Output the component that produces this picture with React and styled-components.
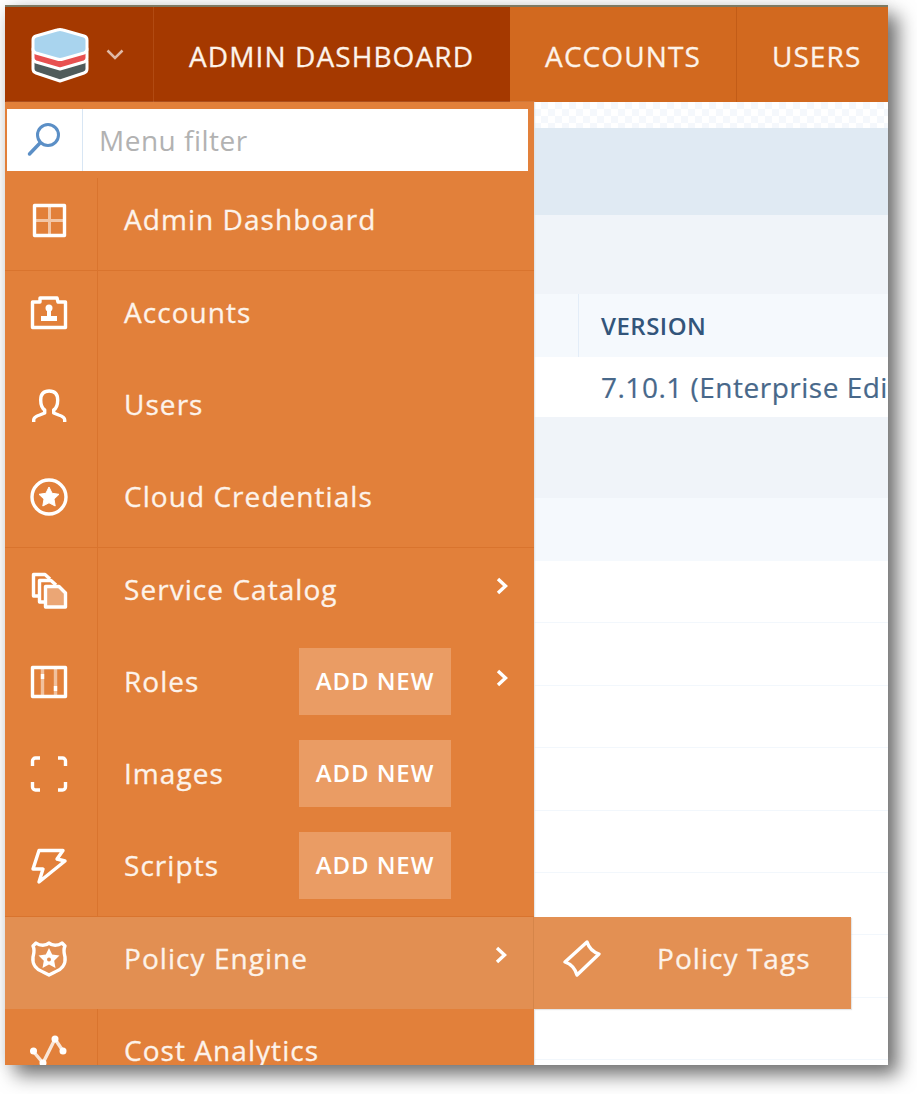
import styled, { createGlobalStyle } from "styled-components";

const GlobalStyle = createGlobalStyle`
  html, body {
    margin: 0;
    padding: 0;
    background: #fff;
    font-family: "Open Sans", "Liberation Sans", sans-serif;
  }
  * { box-sizing: border-box; }
`;

const Page = styled.div`
  width: 917px;
  height: 1094px;
  padding: 5px 0 0 5px;
  overflow: hidden;
`;

const Window = styled.div`
  width: 883px;
  height: 1060px;
  border-top: 2px solid #7d7a63;
  background: #fff;
  display: flex;
  flex-direction: column;
  overflow: hidden;
`;

const Frame = styled.div`
  width: 883px;
  height: 1060px;
  box-shadow: 10px 10px 18px rgba(0, 0, 0, 0.55), 0 0 14px rgba(0, 0, 0, 0.08);
`;

const TopNav = styled.nav`
  display: flex;
  height: 95px;
  flex: none;
  background: #d2691f;
`;

const Brand = styled.div`
  width: 149px;
  flex: none;
  display: flex;
  align-items: center;
  padding-left: 26px;
  gap: 17px;
  background: #a53900;
  border-right: 1px solid #b14a12;
`;

const Tab = styled.div`
  flex: none;
  display: flex;
  align-items: center;
  padding: 2px 35px 0;
  font-size: 28px;
  letter-spacing: 1.1px;
  -webkit-text-stroke: 0.3px #fdf3ea;
  color: #fdf3ea;
  white-space: nowrap;
  background: ${(p) => (p.$active ? "#a53900" : "transparent")};
  border-right: 1px solid ${(p) => (p.$active ? "#a53900" : "#c25c17")};
`;

const Body = styled.div`
  flex: 1;
  display: flex;
  min-height: 0;
`;

const Sidebar = styled.aside`
  width: 529px;
  flex: none;
  background: #e2803a;
  display: flex;
  flex-direction: column;
  box-shadow: 1px 0 1px rgba(225, 225, 225, 0.8);
  z-index: 1;
`;

const SearchWrap = styled.div`
  padding: 7px 6px 7px 2px;
  flex: none;
`;

const SearchBox = styled.div`
  height: 62px;
  background: #fff;
  display: flex;
`;

const SearchIcon = styled.div`
  width: 76px;
  display: flex;
  align-items: center;
  justify-content: center;
  border-right: 1px solid #d8e6f4;
`;

const SearchInput = styled.input`
  flex: 1;
  min-width: 0;
  border: none;
  outline: none;
  padding: 0 0 0 16px;
  background: transparent;
  font: 28px "Open Sans", sans-serif;
  letter-spacing: 0.5px;
  &::placeholder {
    color: #b2b2b2;
    opacity: 1;
  }
`;

const Row = styled.div`
  position: relative;
  height: ${(p) => (p.$divider ? "93px" : "92px")};
  flex: none;
  display: flex;
  background: ${(p) => (p.$hover ? "#e28f52" : "transparent")};
  border-bottom: ${(p) => (p.$divider ? "1px solid #d9742e" : "none")};
  border-right: ${(p) => (p.$hover ? "1px solid #d58549" : "none")};
`;

const IconCell = styled.div`
  width: 93px;
  flex: none;
  display: flex;
  align-items: center;
  padding: 0 0 9px 25px;
  border-right: ${(p) => (p.$hover ? "none" : "1px solid #d9742e")};
`;

const RowContent = styled.div`
  flex: 1;
  min-width: 0;
  display: flex;
  align-items: center;
  padding: 7px 0 18px 26px;
`;

const Label = styled.span`
  min-width: 175px;
  font-size: 28px;
  letter-spacing: 1.05px;
  -webkit-text-stroke: 0.3px #fdf3ea;
  color: #fdf3ea;
  white-space: nowrap;
`;

const AddButton = styled.div`
  width: 152px;
  height: 67px;
  margin-top: 2px;
  display: flex;
  align-items: center;
  justify-content: center;
  background: #ea9c64;
  color: #fff;
  font-size: 24px;
  font-weight: 600;
  letter-spacing: 0.9px;
  padding-bottom: 2px;
  white-space: nowrap;
`;

const Chevron = styled.svg`
  width: 12px;
  height: 18px;
  margin: 0 26px 6px auto;
  flex: none;
`;

const Flyout = styled.div`
  position: absolute;
  top: 0;
  left: calc(100% + 1px);
  width: 317px;
  height: 92px;
  display: flex;
  align-items: center;
  padding: 0 0 11px 29px;
  gap: 56px;
  background: #e39053;
  box-shadow: 1px 1px 1px rgba(190, 190, 190, 0.4);
`;

const Main = styled.main`
  flex: 1;
  min-width: 0;
  display: flex;
  flex-direction: column;
  overflow: hidden;
`;

const Checker = styled.div`
  height: 26px;
  flex: none;
  background: repeating-conic-gradient(#f5f8fc 0 25%, #fff 0 50%) 0 0 / 14px 14px;
`;

const Band = styled.div`
  height: ${(p) => p.$h}px;
  flex: none;
  background: ${(p) => p.$bg};
`;

const HeadRow = styled.div`
  height: 63px;
  flex: none;
  background: #f5f9fd;
  padding-left: 44px;
  display: flex;
`;

const HeadCell = styled.div`
  display: flex;
  align-items: center;
  padding-left: 22px;
  border-left: 1px solid #e3edf8;
  font-size: 24px;
  font-weight: 600;
  letter-spacing: 0.5px;
  color: #33557a;
  white-space: nowrap;
`;

const ValueRow = styled.div`
  height: 60px;
  flex: none;
  display: flex;
  align-items: center;
  padding: 0 0 0 67px;
  font-size: 28px;
  letter-spacing: 0.5px;
  -webkit-text-stroke: 0.2px #48688a;
  color: #48688a;
  white-space: nowrap;
`;

const EmptyRow = styled.div`
  height: 62.4px;
  flex: none;
  border-bottom: 1px solid #f2f7fc;
`;

const Svg = ({ children, size = 38 }) => (
  <svg width={size} height={size} viewBox="0 0 38 38" fill="none" stroke="#fff" strokeWidth="3.4" strokeLinejoin="round">
    {children}
  </svg>
);

const starPoints = (cx, cy, r) => {
  const pts = [];
  for (let i = 0; i < 10; i++) {
    const rad = i % 2 ? r * 0.5 : r;
    const a = (Math.PI / 5) * i - Math.PI / 2;
    pts.push(`${(cx + rad * Math.cos(a)).toFixed(1)},${(cy + rad * Math.sin(a)).toFixed(1)}`);
  }
  return pts.join(" ");
};

const GridIcon = () => (
  <Svg>
    <rect x="4.5" y="4.5" width="30" height="30" />
    <path d="M19.5 5v29M5 19.5h29" strokeOpacity="0.55" strokeWidth="3" />
  </Svg>
);

const AccountsIcon = () => (
  <Svg>
    <path d="M2.5 8H10V4H27L28 8H35.5V33.5H2.5Z" />
    <circle cx="19" cy="14" r="3.5" fill="#fff" stroke="none" />
    <path d="M17 15h4v7h6v5H11v-5h6z" fill="#fff" stroke="none" />
  </Svg>
);

const UserIcon = () => (
  <Svg>
    <path d="M3.7 36v-2c0-3 3-4 6-5l5-2v-3c-3-2-4-5-4-10 0-6 3-9 8.5-9s8.5 3 8.5 9c0 5-1 8-4 10v3l5 2c3 1 6 2 6 5v2" />
  </Svg>
);

const StarIcon = () => (
  <Svg>
    <circle cx="19" cy="19" r="17" />
    <polygon points={starPoints(19, 19.5, 10.5)} fill="#fff" stroke="#fff" strokeWidth="1" />
  </Svg>
);

const CatalogIcon = () => (
  <Svg>
    <path d="M8 25H3.5V3.5H15L20 8" />
    <path d="M14 31H9.5V9.5H21L26 14" />
    <path d="M15.5 15.5H29L35.5 22V36H15.5Z" fill="rgba(255,255,255,0.3)" />
  </Svg>
);

const RolesIcon = () => (
  <Svg>
    <rect x="2.5" y="4.5" width="33" height="29" />
    <path d="M12.5 5v29M25.5 5v29" strokeOpacity="0.5" />
    <path d="M12.5 11v5M25.5 23v5" />
  </Svg>
);

const ImagesIcon = () => (
  <Svg>
    <path d="M2.5 11V6a3 3 0 0 1 3-3H10M28 3h4.5a3 3 0 0 1 3 3v5M35.5 27v5a3 3 0 0 1-3 3H28M10 35H5.5a3 3 0 0 1-3-3v-5" />
  </Svg>
);

const BoltIcon = () => (
  <Svg>
    <polygon points="9,3.5 33,3.5 27,12 35,14 9,35 13,22 3,22" />
  </Svg>
);

const ShieldIcon = () => (
  <Svg>
    <path d="M19 3c3 3 9 3 13 0l3 3c-2 4-1 7 0 11 1 8-4 13-10 15l-6 3-6-3C7 30 2 25 3 17c1-4 2-7 0-11l3-3c4 3 10 3 13 0z" />
    <polygon points={starPoints(19, 19, 11)} fill="#fff" stroke="none" />
    <circle cx="19" cy="19.5" r="2" fill="#e28f52" stroke="none" />
  </Svg>
);

const CostIcon = () => (
  <Svg>
    <path d="M3 19L13 31L25 7L33 19" strokeOpacity="0.8" />
    <circle cx="3.5" cy="19" r="3.5" fill="#fff" stroke="none" />
    <circle cx="13" cy="31" r="3.5" fill="#fff" stroke="none" />
    <circle cx="25" cy="7" r="3.5" fill="#fff" stroke="none" />
    <circle cx="33" cy="19" r="3.5" fill="#fff" stroke="none" />
  </Svg>
);

const TicketIcon = () => (
  <Svg>
    <path d="M24 3Q27 12 36 15L14 36Q11 26 2 23Z" />
  </Svg>
);

const Logo = () => (
  <svg width="58" height="56" viewBox="0 0 58 56" stroke="#fff" strokeWidth="3" strokeLinejoin="round">
    <path d="M2 34Q2 31 5 30L29 22L53 30Q56 31 56 34V42Q56 45 53 46L29 54L5 46Q2 45 2 42Z" fill="#4f5b5b" />
    <path d="M2 23Q2 20 5 19L29 11L53 19Q56 20 56 23V31Q56 34 53 35L29 42L5 35Q2 34 2 31Z" fill="#e85050" />
    <path d="M5 9L26 3Q29 2 32 3L53 9Q56 10 56 13V22Q56 25 53 26L32 32Q29 33 26 32L5 26Q2 25 2 22V13Q2 10 5 9Z" fill="#a9d4ee" />
  </svg>
);

const Caret = () => (
  <svg width="18" height="11" viewBox="0 0 18 11" fill="none" stroke="rgba(255,255,255,0.65)" strokeWidth="2.5">
    <path d="M1.5 1.5L9 9L16.5 1.5" />
  </svg>
);

const Magnifier = () => (
  <svg width="36" height="36" viewBox="0 0 36 36" fill="none" stroke="#5b8fc6" strokeWidth="3" strokeLinecap="round">
    <circle cx="21" cy="13" r="10.5" />
    <path d="M13 21L2.5 32" strokeWidth="3.5" />
  </svg>
);

const RowChevron = () => (
  <Chevron viewBox="0 0 12 18" fill="none" stroke="#fff" strokeWidth="3.4">
    <path d="M2 2L9.5 9L2 16" />
  </Chevron>
);

const menu = [
  { icon: GridIcon, label: "Admin Dashboard", divider: true },
  { icon: AccountsIcon, label: "Accounts" },
  { icon: UserIcon, label: "Users" },
  { icon: StarIcon, label: "Cloud Credentials", divider: true },
  { icon: CatalogIcon, label: "Service Catalog", chevron: true },
  { icon: RolesIcon, label: "Roles", add: true, chevron: true },
  { icon: ImagesIcon, label: "Images", add: true },
  { icon: BoltIcon, label: "Scripts", add: true, divider: true },
  { icon: ShieldIcon, label: "Policy Engine", chevron: true, hover: true },
  { icon: CostIcon, label: "Cost Analytics" },
];

const App = () => {
  return (
    <>
      <GlobalStyle />
      <Page>
        <Frame>
          <Window>
            <TopNav>
              <Brand>
                <Logo />
                <Caret />
              </Brand>
              <Tab $active>ADMIN DASHBOARD</Tab>
              <Tab>ACCOUNTS</Tab>
              <Tab>USERS</Tab>
            </TopNav>
            <Body>
              <Sidebar>
                <SearchWrap>
                  <SearchBox>
                    <SearchIcon>
                      <Magnifier />
                    </SearchIcon>
                    <SearchInput placeholder="Menu filter" />
                  </SearchBox>
                </SearchWrap>
                {menu.map((item) => (
                  <Row key={item.label} $divider={item.divider} $hover={item.hover}>
                    <IconCell $hover={item.hover}>
                      <item.icon />
                    </IconCell>
                    <RowContent>
                      <Label>{item.label}</Label>
                      {item.add && <AddButton>ADD NEW</AddButton>}
                      {item.chevron && <RowChevron />}
                    </RowContent>
                    {item.hover && (
                      <Flyout>
                        <TicketIcon />
                        <Label>Policy Tags</Label>
                      </Flyout>
                    )}
                  </Row>
                ))}
              </Sidebar>
              <Main>
                <Checker />
                <Band $h={87} $bg="#e0eaf3" />
                <Band $h={79} $bg="#f0f4f9" />
                <HeadRow>
                  <HeadCell>VERSION</HeadCell>
                </HeadRow>
                <ValueRow>7.10.1 (Enterprise Edition)</ValueRow>
                <Band $h={81} $bg="#f0f4f9" />
                <Band $h={63} $bg="#f5f9fd" />
                {[...Array(8)].map((_, i) => (
                  <EmptyRow key={i} />
                ))}
              </Main>
            </Body>
          </Window>
        </Frame>
      </Page>
    </>
  );
};

export default App;
